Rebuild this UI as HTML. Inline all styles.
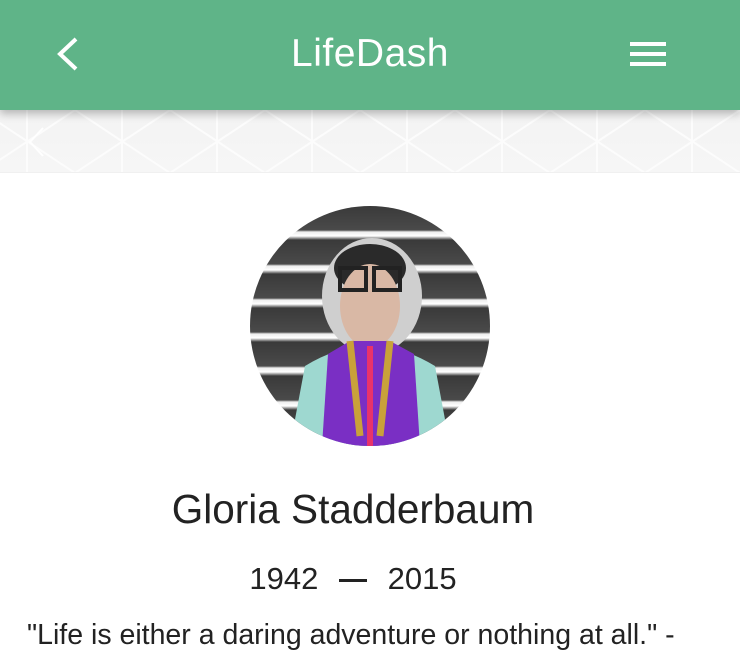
<!DOCTYPE html>
<html><head><meta charset="utf-8"><style>
*{margin:0;padding:0;box-sizing:border-box}
body{width:740px;height:662px;overflow:hidden;background:#fff;font-family:"Liberation Sans",sans-serif;position:relative}
.hdr{position:absolute;left:0;top:0;width:740px;height:110px;background:#5fb488;z-index:2;box-shadow:0 4px 8px rgba(0,0,0,.25)}
.title{position:absolute;left:0;width:740px;top:32px;text-align:center;color:#fff;font-size:39px;letter-spacing:.5px}
.ban{position:absolute;left:0;top:110px;width:740px;height:63px;background:linear-gradient(180deg,#f3f3f3,#f6f6f6);overflow:hidden;border-bottom:1px solid #f0f0f0}
.circ{position:absolute;left:250px;top:206px;width:240px;height:240px;border-radius:50%;overflow:hidden;background:repeating-linear-gradient(180deg,#3a3a3a 0,#4a4a4a 24px,#eee 26px,#fff 30px,#3a3a3a 34px)}
.name{position:absolute;left:-17px;width:740px;top:486px;text-align:center;font-size:40.5px;color:#222}
.yrs{position:absolute;left:-17px;width:740px;top:561px;text-align:center;font-size:31px;color:#222;word-spacing:6px}
.q{position:absolute;left:27px;top:619px;font-size:28.5px;color:#222;white-space:nowrap}
</style></head><body>
<div class="hdr">
<svg width="740" height="110" style="position:absolute;left:0;top:0">
<polyline points="76,39 60,54 76,69" fill="none" stroke="#fff" stroke-width="4"/>
<rect x="630" y="42" width="36" height="4" fill="#fff"/>
<rect x="630" y="52" width="36" height="4" fill="#fff"/>
<rect x="630" y="62" width="36" height="4" fill="#fff"/>
</svg>
<div class="title">LifeDash</div>
</div>
<div class="ban">
<svg width="740" height="63">
<g stroke="#fcfcfc" stroke-width="2" fill="none">
<path d="M-20,0 L75,63 M75,0 L-20,63 M75,0 L170,63 M170,0 L75,63 M170,0 L265,63 M265,0 L170,63 M265,0 L360,63 M360,0 L265,63 M360,0 L455,63 M455,0 L360,63 M455,0 L550,63 M550,0 L455,63 M550,0 L645,63 M645,0 L550,63 M645,0 L740,63 M740,0 L645,63"/>
<path d="M27,0V63 M122,0V63 M217,0V63 M312,0V63 M407,0V63 M502,0V63 M597,0V63 M692,0V63"/>
</g>
<polyline points="43,18 30,32 43,46" fill="none" stroke="#fff" stroke-width="2"/>
</svg>
</div>
<div class="circ">
<svg width="240" height="240" style="position:absolute;left:0;top:0">
<ellipse cx="122" cy="90" rx="50" ry="58" fill="#cfcfcf"/>
<ellipse cx="120" cy="62" rx="36" ry="24" fill="#2a2a2a"/>
<ellipse cx="120" cy="100" rx="30" ry="42" fill="#d9b8a5"/>
<rect x="90" y="62" width="26" height="22" fill="none" stroke="#222" stroke-width="4"/>
<rect x="124" y="62" width="26" height="22" fill="none" stroke="#222" stroke-width="4"/>
<path d="M40,240 L55,160 Q120,120 185,160 L200,240 Z" fill="#9ed8d0"/>
<path d="M78,148 L100,135 L140,135 L164,148 L170,240 L72,240 Z" fill="#7a2fc4"/>
<rect x="117" y="140" width="6" height="100" fill="#e8336a"/>
<path d="M100,135 L110,230 M140,135 L130,230" stroke="#c9a13a" stroke-width="7" fill="none"/>
</svg>
</div>
<div class="name">Gloria Stadderbaum</div>
<div class="yrs">1942 <span style="display:inline-block;width:28px;height:3px;background:#222;vertical-align:middle;margin:0 6px"></span> 2015</div>
<div class="q">"Life is either a daring adventure or nothing at all." -</div>
</body></html>
